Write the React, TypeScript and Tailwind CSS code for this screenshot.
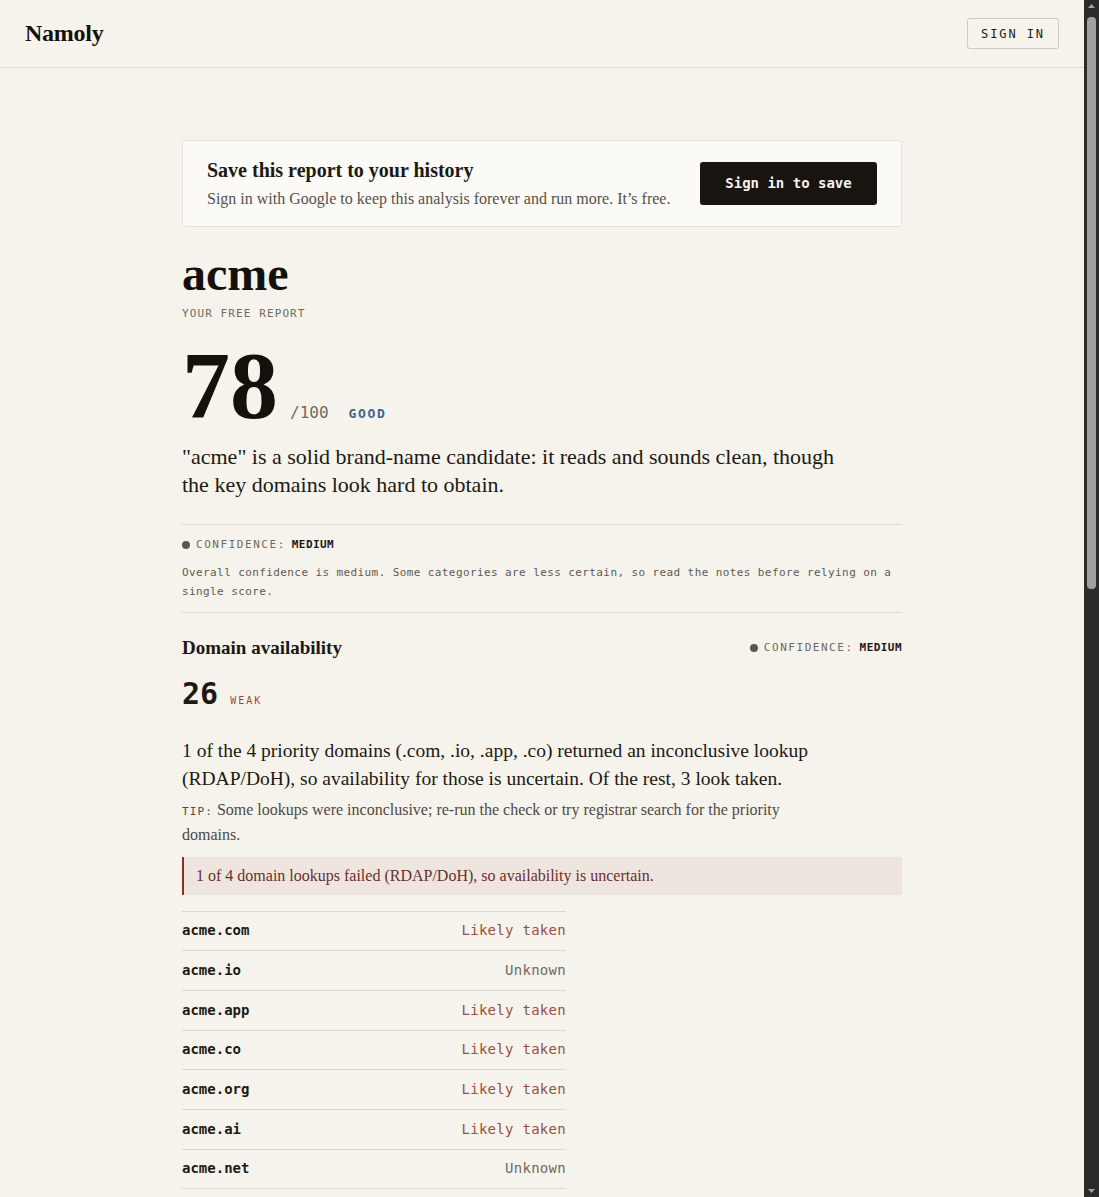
import React from 'react';

const serif = "font-['Liberation_Serif',serif]";
const mono = "font-['DejaVu_Sans_Mono',monospace]";

interface DomainRow {
  name: string;
  status: 'taken' | 'unknown' | 'free';
}

const domains: DomainRow[] = [
  { name: 'acme.com', status: 'taken' },
  { name: 'acme.io', status: 'unknown' },
  { name: 'acme.app', status: 'taken' },
  { name: 'acme.co', status: 'taken' },
  { name: 'acme.org', status: 'taken' },
  { name: 'acme.ai', status: 'taken' },
  { name: 'acme.net', status: 'unknown' },
  { name: 'getacme.com', status: 'free' },
  { name: 'tryacme.com', status: 'free' },
];

const Confidence: React.FC<{ level: string }> = ({ level }) => (
  <div className={`flex items-center gap-[6px] ${mono} text-[11px] leading-[14px] tracking-[0.14em]`}>
    <span className="w-[8px] h-[8px] rounded-full bg-[#5a5650]" />
    <span className="text-[#6f6a62]">CONFIDENCE:</span>
    <span className="text-[#1c1915] font-bold tracking-[0.04em]">{level}</span>
  </div>
);

const Section: React.FC<{
  title: string;
  score: number;
  label: string;
  labelColor: string;
  body: string;
  tip: string;
}> = ({ title, score, label, labelColor, body, tip }) => (
  <div className="border-t border-[#ddd8cf] pt-[21px] pb-[32px]">
    <div className="flex items-center justify-between">
      <h2 className={`${serif} text-[19px] font-bold text-[#1c1915]`}>{title}</h2>
      <Confidence level="MEDIUM" />
    </div>
    <div className="flex items-baseline gap-[12px] mt-[8px]">
      <span className={`${mono} text-[30px] font-bold text-[#1c1915]`}>{score}</span>
      <span className={`${mono} text-[10px] tracking-[0.2em] ${labelColor}`}>{label}</span>
    </div>
    <p className={`${serif} text-[19.5px] leading-[28px] text-[#1c1915] mt-[21px] max-w-[640px]`}>{body}</p>
    <p className={`${serif} text-[16px] leading-[23px] text-[#4e4a44] mt-[6px] max-w-[625px]`}>
      <span className={`${mono} text-[11px] tracking-[0.1em]`}>TIP:</span> {tip}
    </p>
  </div>
);

const Scrollbar: React.FC = () => (
  <div className="w-[15px] h-full bg-[#2b2b2b] flex flex-col items-center shrink-0">
    <svg width="9" height="6" viewBox="0 0 9 6" className="mt-[3px]">
      <path d="M4.5 1 L8 5 L1 5 Z" fill="#a3a3a3" />
    </svg>
    <div className="w-[9px] h-[572px] mt-[8px] rounded-[4px] bg-[#a0a0a0]" />
    <div className="flex-1" />
    <svg width="9" height="6" viewBox="0 0 9 6" className="mb-[3px]">
      <path d="M1 1 L8 1 L4.5 5 Z" fill="#a3a3a3" />
    </svg>
  </div>
);

export default function App() {
  return (
    <div className="h-screen flex bg-[#f6f3ec] text-[#1c1915] overflow-hidden">
      <div className="flex-1 h-full overflow-y-auto [scrollbar-width:none]">
        <header className="h-[68px] border-b border-[#dedad2] flex items-center justify-between px-[25px]">
          <div className={`${serif} text-[24px] leading-[30px] font-bold text-[#14110d] tracking-[-0.01em] -mt-[2px]`}>Namoly</div>
          <button className={`${mono} text-[12px] tracking-[0.16em] text-[#1c1915] border border-[#cfcac0] rounded-[3px] w-[92px] h-[31px] flex items-center justify-center`}>
            SIGN IN
          </button>
        </header>

        <main className="max-w-[720px] mx-auto pt-[72px] pb-[80px]">
          <div className="bg-[#fbfaf6] border border-[#e5e1d8] rounded-[3px] flex items-center justify-between pl-[24px] pr-[24px] h-[87px]">
            <div>
              <div className={`${serif} text-[20px] leading-[26px] font-bold text-[#1c1915]`}>Save this report to your history</div>
              <div className={`${serif} text-[16px] leading-[22px] text-[#55514b] mt-[5px]`}>
                Sign in with Google to keep this analysis forever and run more. It’s free.
              </div>
            </div>
            <button className={`${mono} bg-[#181410] text-[#f6f3ec] font-bold text-[14px] rounded-[3px] w-[177px] h-[43px]`}>
              Sign in to save
            </button>
          </div>

          <h1 className={`${serif} text-[48px] font-bold leading-none mt-[23px] text-[#14110d]`}>acme</h1>
          <div className={`${mono} text-[11px] leading-[16px] tracking-[0.1em] text-[#6f6a62] mt-[8px]`}>YOUR FREE REPORT</div>

          <div className="flex items-baseline mt-[16px]">
            <span className={`${serif} text-[96px] font-bold leading-none text-[#14110d]`}>78</span>
            <span className={`${mono} text-[16px] text-[#6f6a62] ml-[12px]`}>/100</span>
            <span className={`${mono} text-[13px] font-bold tracking-[0.13em] text-[#3f6491] ml-[20px]`}>GOOD</span>
          </div>

          <p className={`${serif} text-[22px] leading-[28px] text-[#1c1915] mt-[9px] max-w-[670px]`}>
            "acme" is a solid brand-name candidate: it reads and sounds clean, though the key domains look hard to obtain.
          </p>

          <div className="border-t border-[#ddd8cf] mt-[25px] pt-[13px] pb-[11px]">
            <Confidence level="MEDIUM" />
            <p className={`${mono} text-[11px] leading-[19px] tracking-[0.4px] text-[#5e5a53] mt-[11px]`}>
              Overall confidence is medium. Some categories are less certain, so read the notes before relying on a single score.
            </p>
          </div>

          <div className="border-t border-[#ddd8cf] pt-[21px]">
            <div className="flex items-center justify-between">
              <h2 className={`${serif} text-[19px] font-bold text-[#1c1915]`}>Domain availability</h2>
              <Confidence level="MEDIUM" />
            </div>
            <div className="flex items-baseline gap-[12px] mt-[8px]">
              <span className={`${mono} text-[30px] font-bold text-[#1c1915]`}>26</span>
              <span className={`${mono} text-[10px] tracking-[0.2em] text-[#9b4a3e]`}>WEAK</span>
            </div>
            <p className={`${serif} text-[19.5px] leading-[28px] text-[#1c1915] mt-[21px] max-w-[640px]`}>
              1 of the 4 priority domains (.com, .io, .app, .co) returned an inconclusive lookup (RDAP/DoH), so availability for those is uncertain. Of the rest, 3 look taken.
            </p>
            <p className={`${serif} text-[16px] leading-[23px] text-[#4e4a44] mt-[5px] max-w-[625px]`}>
              <span className={`${mono} text-[11px] tracking-[0.1em]`}>TIP:</span> Some lookups were inconclusive; re-run the check or try registrar search for the priority domains.
            </p>
            <div className={`${serif} text-[16px] text-[#6a2f2b] bg-[#efe5df] border-l-2 border-[#8b2f2a] h-[38px] flex items-center pl-[12px] mt-[11px]`}>
              1 of 4 domain lookups failed (RDAP/DoH), so availability is uncertain.
            </div>

            <div className="w-[384px] mt-[16px] mb-[40px]">
              {domains.map((d) => (
                <div key={d.name} className="h-[39.7px] border-t border-[#ddd8cf] last:border-b flex items-center justify-between">
                  <span className={`${mono} text-[14px] font-bold text-[#1c1915]`}>{d.name}</span>
                  <span
                    className={`${mono} text-[14px] tracking-[0.02em] ${
                      d.status === 'taken' ? 'text-[#9b4f44]' : d.status === 'unknown' ? 'text-[#6f6a63]' : 'text-[#3d7a4d]'
                    }`}
                  >
                    {d.status === 'taken' ? 'Likely taken' : d.status === 'unknown' ? 'Unknown' : 'Likely available'}
                  </span>
                </div>
              ))}
            </div>
          </div>

          <Section
            title="Pronunciation"
            score={88}
            label="STRONG"
            labelColor="text-[#3d7a4d]"
            body="Two short syllables with an obvious stress pattern; most English speakers will say it the same way on first sight."
            tip="Say it aloud over a phone call to confirm nobody spells it back differently."
          />
          <Section
            title="Trademark conflicts"
            score={41}
            label="FAIR"
            labelColor="text-[#9a7a2e]"
            body="The word is widely used as a generic placeholder company name, and several registered marks exist across unrelated classes."
            tip="Check the classes that match your product before committing to the name."
          />
        </main>
      </div>
      <Scrollbar />
    </div>
  );
}
